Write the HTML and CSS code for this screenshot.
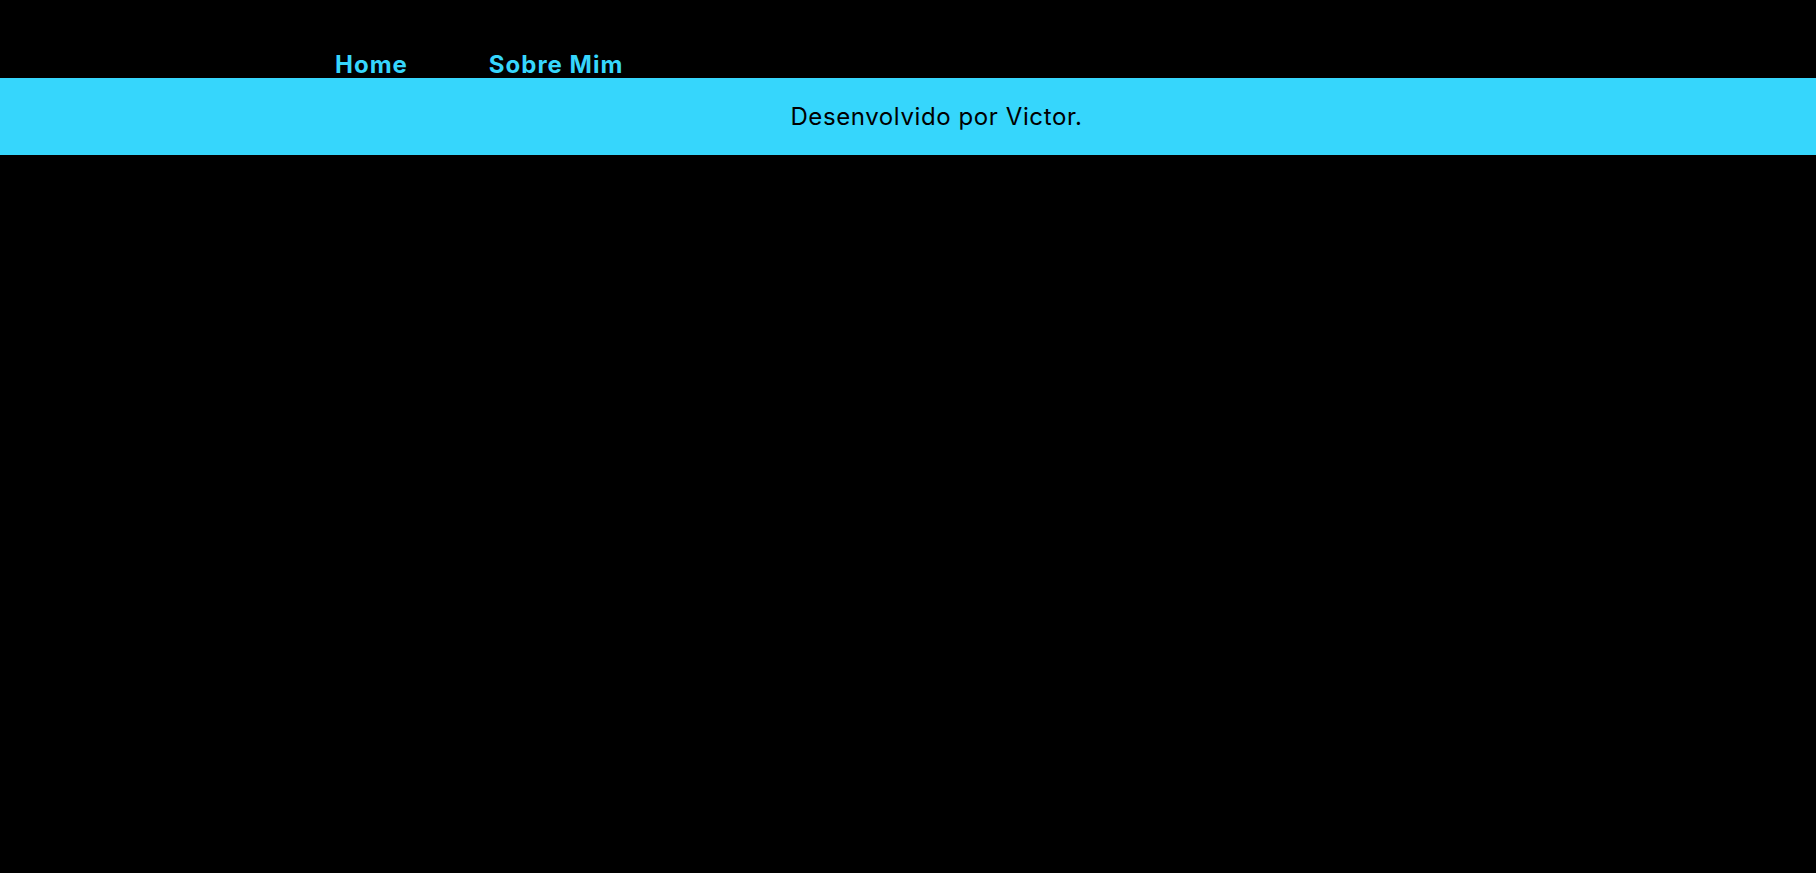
FILE: index.html
```html
<!DOCTYPE html>
<html lang="pt-BR">
<head>
<meta charset="utf-8">
<title>Victor</title>
<link rel="stylesheet" href="styles.css">
</head>
<body>
<header class="top">
  <nav class="nav">
    <a class="nav-link" href="#">Home</a>
    <a class="nav-link" href="#">Sobre Mim</a>
  </nav>
</header>
<footer class="foot">
  <p class="foot-text">Desenvolvido por Victor.</p>
</footer>
</body>
</html>
```
FILE: styles.css
```css
html, body {
  margin: 0;
  padding: 0;
  background: #000;
  height: 100%;
}
body {
  font-family: "Inter", "DejaVu Sans", sans-serif;
}
.top {
  height: 78px;
  display: flex;
  align-items: flex-end;
  padding-left: 335px;
}
.nav {
  display: flex;
  gap: 81px;
  line-height: 1;
  padding-bottom: 1px;
}
.nav-link {
  color: #36d6fc;
  text-decoration: none;
  font-weight: 700;
  font-size: 24px;
  letter-spacing: 1px;
}
.foot {
  background: #36d6fc;
  height: 77px;
  display: flex;
  align-items: center;
  justify-content: center;
  padding-left: 57px;
}
.foot-text {
  margin: 0;
  color: #000;
  font-size: 24px;
  line-height: 1;
  letter-spacing: 0.6px;
}
```
